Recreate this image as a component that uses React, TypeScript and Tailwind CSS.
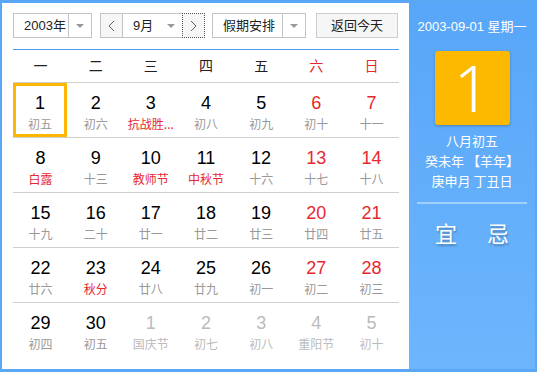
import React from 'react';

type Day = { n: number; lunar: string; red?: boolean; fest?: boolean; other?: boolean; sel?: boolean };

const rows: Day[][] = [
  [
    { n: 1, lunar: '初五', sel: true },
    { n: 2, lunar: '初六' },
    { n: 3, lunar: '抗战胜...', fest: true },
    { n: 4, lunar: '初八' },
    { n: 5, lunar: '初九' },
    { n: 6, lunar: '初十', red: true },
    { n: 7, lunar: '十一', red: true },
  ],
  [
    { n: 8, lunar: '白露', fest: true },
    { n: 9, lunar: '十三' },
    { n: 10, lunar: '教师节', fest: true },
    { n: 11, lunar: '中秋节', fest: true },
    { n: 12, lunar: '十六' },
    { n: 13, lunar: '十七', red: true },
    { n: 14, lunar: '十八', red: true },
  ],
  [
    { n: 15, lunar: '十九' },
    { n: 16, lunar: '二十' },
    { n: 17, lunar: '廿一' },
    { n: 18, lunar: '廿二' },
    { n: 19, lunar: '廿三' },
    { n: 20, lunar: '廿四', red: true },
    { n: 21, lunar: '廿五', red: true },
  ],
  [
    { n: 22, lunar: '廿六' },
    { n: 23, lunar: '秋分', fest: true },
    { n: 24, lunar: '廿八' },
    { n: 25, lunar: '廿九' },
    { n: 26, lunar: '初一' },
    { n: 27, lunar: '初二', red: true },
    { n: 28, lunar: '初三', red: true },
  ],
  [
    { n: 29, lunar: '初四' },
    { n: 30, lunar: '初五' },
    { n: 1, lunar: '国庆节', other: true },
    { n: 2, lunar: '初七', other: true },
    { n: 3, lunar: '初八', other: true },
    { n: 4, lunar: '重阳节', other: true },
    { n: 5, lunar: '初十', other: true },
  ],
];

const weekdays = ['一', '二', '三', '四', '五', '六', '日'];

function Caret() {
  return <span className="block w-0 h-0 border-x-[4px] border-x-transparent border-t-[4px] border-t-[#999]" />;
}

export default function App() {
  return (
    <div
      className="w-[537px] h-[372px] flex border-x-2 border-t-[3px] border-b-[3px] border-[#5aa7f6] bg-white text-[#222]"
      style={{ fontFamily: '"Liberation Sans", "Noto Sans CJK SC", sans-serif' }}
    >
      {/* Left calendar */}
      <div className="w-[407px] pl-[11px] pr-[10px] pt-[10px]">
        {/* Controls */}
        <div className="flex h-[25px] text-[13px] whitespace-nowrap">
          <div className="w-[79px] flex border border-[#c3c3c3]">
            <div className="flex-1 flex items-center pl-[10px]">2003年</div>
            <div className="w-[23px] flex items-center justify-center border-l border-[#c3c3c3]">
              <Caret />
            </div>
          </div>
          <div className="ml-[8px] w-[105px] flex border border-[#c3c3c3]">
            <div className="w-[22px] flex items-center justify-center bg-[#f6f6f6] border-r border-[#c3c3c3]">
              <svg width="7" height="12" viewBox="0 0 7 12"><path d="M6 1 1 6l5 5" fill="none" stroke="#666" strokeWidth="1" /></svg>
            </div>
            <div className="flex-1 flex items-center justify-between pl-[10px] pr-[8px]">
              <span>9月</span>
              <Caret />
            </div>
            <div className="w-[23px] flex items-center justify-center bg-[#f6f6f6] border border-dotted border-[#555] -m-px">
              <svg width="7" height="12" viewBox="0 0 7 12"><path d="M1 1l5 5-5 5" fill="none" stroke="#666" strokeWidth="1" /></svg>
            </div>
          </div>
          <div className="ml-[7px] w-[94px] flex border border-[#c3c3c3]">
            <div className="flex-1 flex items-center pl-[10px]">假期安排</div>
            <div className="w-[23px] flex items-center justify-center border-l border-[#c3c3c3]">
              <Caret />
            </div>
          </div>
          <div className="ml-[10px] w-[82px] flex items-center justify-center border border-[#cdcdcd] bg-[#f6f6f6]">
            返回今天
          </div>
        </div>

        <div className="mt-[11px] h-px bg-[#4d9df0]" />

        {/* Weekday header */}
        <div className="grid grid-cols-7 h-[33px] border-b border-[#cfcfcf] text-[14px]">
          {weekdays.map((w, i) => (
            <div key={w} className={`flex items-center justify-center ${i >= 5 ? 'text-[#e8282f]' : 'text-[#222]'}`}>
              {w}
            </div>
          ))}
        </div>

        {/* Days */}
        {rows.map((row, ri) => (
          <div key={ri} className={`grid grid-cols-7 h-[55px] ${ri < rows.length - 1 ? 'border-b border-[#cfcfcf]' : ''}`}>
            {row.map((d, di) => {
              const numColor = d.other ? 'text-[#bbb]' : d.red ? 'text-[#e8282f]' : 'text-black';
              const lunColor = d.other ? 'text-[#bbb]' : d.fest ? 'text-[#e8282f]' : 'text-[#999]';
              return (
                <div
                  key={di}
                  className={`flex flex-col items-center ${d.sel ? 'border-[3px] border-[#fdb702] w-[54px] pt-[7px]' : 'pt-[10px]'}`}
                >
                  <span className={`text-[18px] leading-[21px] ${numColor}`}>{d.n}</span>
                  <span
                    className={`text-[12px] leading-[20px] ${lunColor}`}
                    style={{ fontFamily: '"Noto Sans CJK SC", sans-serif' }}
                  >
                    {d.lunar}
                  </span>
                </div>
              );
            })}
          </div>
        ))}
      </div>

      {/* Right panel */}
      <div
        className="flex-1 flex flex-col items-center bg-gradient-to-b from-[#58a6f8] to-[#6db6fd] text-white"
        style={{ fontFamily: '"Noto Sans CJK SC", sans-serif' }}
      >
        <div className="mt-[15px] text-[13px] leading-[18px]" style={{ fontFamily: '"Liberation Sans", "Noto Sans CJK SC", sans-serif' }}>
          2003-09-01 星期一
        </div>
        <div className="mt-[15px] w-[75px] h-[74px] rounded-[3px] bg-[#fdb900] shadow-[0_1px_3px_rgba(0,0,0,0.25)] flex items-center justify-center">
          <span className="text-[64px] leading-none font-light" style={{ fontFamily: '"Noto Sans", sans-serif' }}>1</span>
        </div>
        <div className="mt-[6px] text-[13px] leading-[20px]">八月初五</div>
        <div className="text-[13px] leading-[20px]">癸未年 【羊年】</div>
        <div className="text-[13px] leading-[20px]">庚申月 丁丑日</div>
        <div className="mt-[11px] w-[110px] h-[2px] bg-white/40" />
        <div className="mt-[13px] flex gap-[30px] text-[22px] leading-[30px] [text-shadow:1px_2px_2px_rgba(0,0,0,0.25)]">
          <span>宜</span>
          <span>忌</span>
        </div>
      </div>
    </div>
  );
}
